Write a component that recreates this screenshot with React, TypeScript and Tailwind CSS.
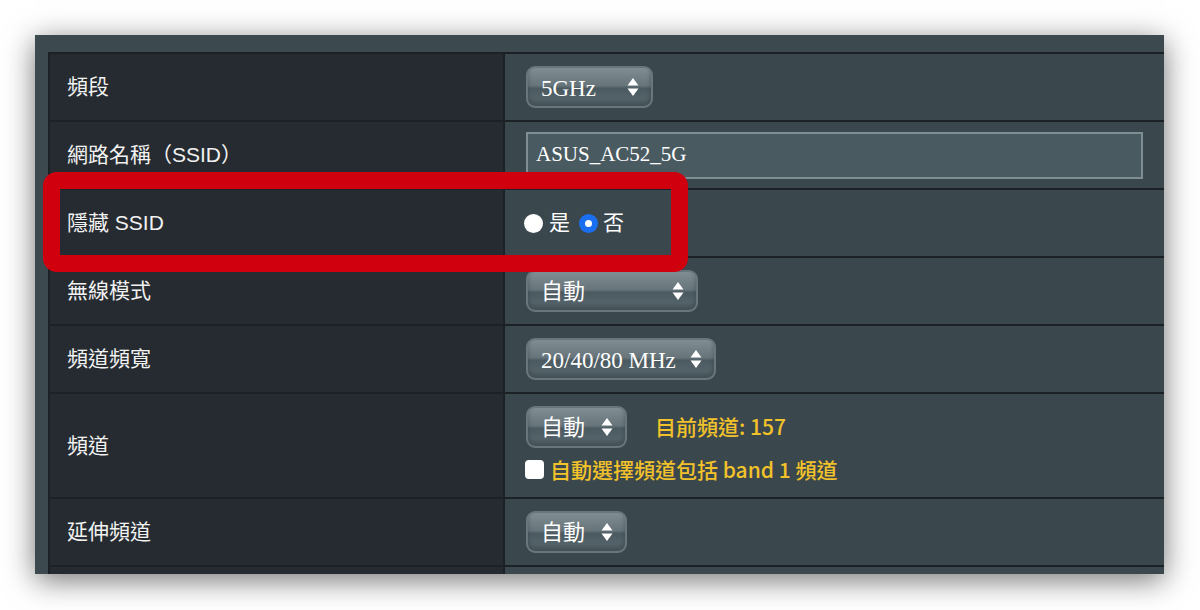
const sans = "font-['Liberation_Sans','Noto_Sans_CJK_TC',sans-serif]";
const serif = "font-['Liberation_Serif','Noto_Sans_CJK_TC',serif]";
const note = "font-['Noto_Sans_CJK_TC',sans-serif] font-medium text-[#f2c22a] text-[21px]";

function Arrows() {
  return (
    <svg width="12" height="20" viewBox="0 0 12 20" className="shrink-0">
      <path d="M6 1 L11.5 8.5 L0.5 8.5 Z" fill="#ffffff" />
      <path d="M6 19 L11.5 11.5 L0.5 11.5 Z" fill="#ffffff" />
    </svg>
  );
}

function Select({ label, width, serifText = false }: { label: string; width: string; serifText?: boolean }) {
  return (
    <div
      className={`${width} h-[42px] rounded-[9px] border-2 border-[#67777d] bg-[linear-gradient(to_bottom,#808d92_0%,#67757b_46%,#4b5a60_54%,#5b6a70_100%)] shadow-[inset_0_-4px_4px_rgba(40,50,55,0.45)] flex items-center justify-between pl-[13px] pr-[12px]`}
    >
      <span className={`${serifText ? serif + " text-[23px]" : sans + " text-[22px]"} text-white leading-none mt-[2px]`}>
        {label}
      </span>
      <Arrows />
    </div>
  );
}

function Row({ label, height = "h-[68px]", children }: { label: string; height?: string; children: React.ReactNode }) {
  return (
    <div className={`flex ${height} border-b-2 border-[#1b2125]`}>
      <div className={`w-[455px] shrink-0 bg-[#252b30] border-r-2 border-[#1b2125] flex items-center pl-[17px] text-[21px] text-[#f2f2f2] ${sans}`}>
        {label}
      </div>
      <div className="flex-1 bg-[#3a474d] pl-[21px] flex flex-col justify-center">{children}</div>
    </div>
  );
}

export default function App() {
  return (
    <div className="w-[1200px] h-[610px] bg-white relative overflow-hidden">
      <div className="absolute left-[35px] top-[35px] w-[1129px] h-[539px] bg-[#3c494f] overflow-hidden shadow-[0_6px_28px_rgba(0,0,0,0.55)] pt-[17px] pl-[13px]">
        <div className="w-[1200px] border-t-2 border-l-2 border-[#1b2125]">
          <Row label="頻段">
            <Select label="5GHz" width="w-[127px]" serifText />
          </Row>
          <Row label="網路名稱（SSID）">
            <div className={`w-[617px] h-[47px] border-2 border-[#7e8e94] bg-[#4a5a61] flex items-center pl-[8px] text-white text-[21px] ${serif}`}>
              ASUS_AC52_5G
            </div>
          </Row>
          <Row label="隱藏 SSID">
            <div className={`flex items-center text-[21px] text-white ${sans} -ml-[2px]`}>
              <span className="w-[19px] h-[19px] rounded-full bg-white" />
              <span className="ml-[6px]">是</span>
              <span className="ml-[9px] w-[19px] h-[19px] rounded-full bg-[#1a6ff0] flex items-center justify-center">
                <span className="w-[7px] h-[7px] rounded-full bg-white" />
              </span>
              <span className="ml-[5px]">否</span>
            </div>
          </Row>
          <Row label="無線模式">
            <Select label="自動" width="w-[172px]" />
          </Row>
          <Row label="頻道頻寬">
            <Select label="20/40/80 MHz" width="w-[190px]" serifText />
          </Row>
          <Row label="頻道" height="h-[105px]">
            <div className="flex items-center">
              <Select label="自動" width="w-[101px]" />
              <span className={`ml-[28px] ${note}`}>目前頻道: 157</span>
            </div>
            <div className={`flex items-center mt-[6px] -ml-[1px] ${note}`}>
              <span className="w-[19px] h-[19px] rounded-[4px] bg-white" />
              <span className="ml-[6px]">自動選擇頻道包括 band 1 頻道</span>
            </div>
          </Row>
          <Row label="延伸頻道">
            <Select label="自動" width="w-[101px]" />
          </Row>
          <Row label="">
            <span />
          </Row>
        </div>
      </div>
      <div className="absolute left-[43px] top-[172px] w-[645px] h-[100px] border-[17px] border-[#d1000f] rounded-[14px]" />
    </div>
  );
}
